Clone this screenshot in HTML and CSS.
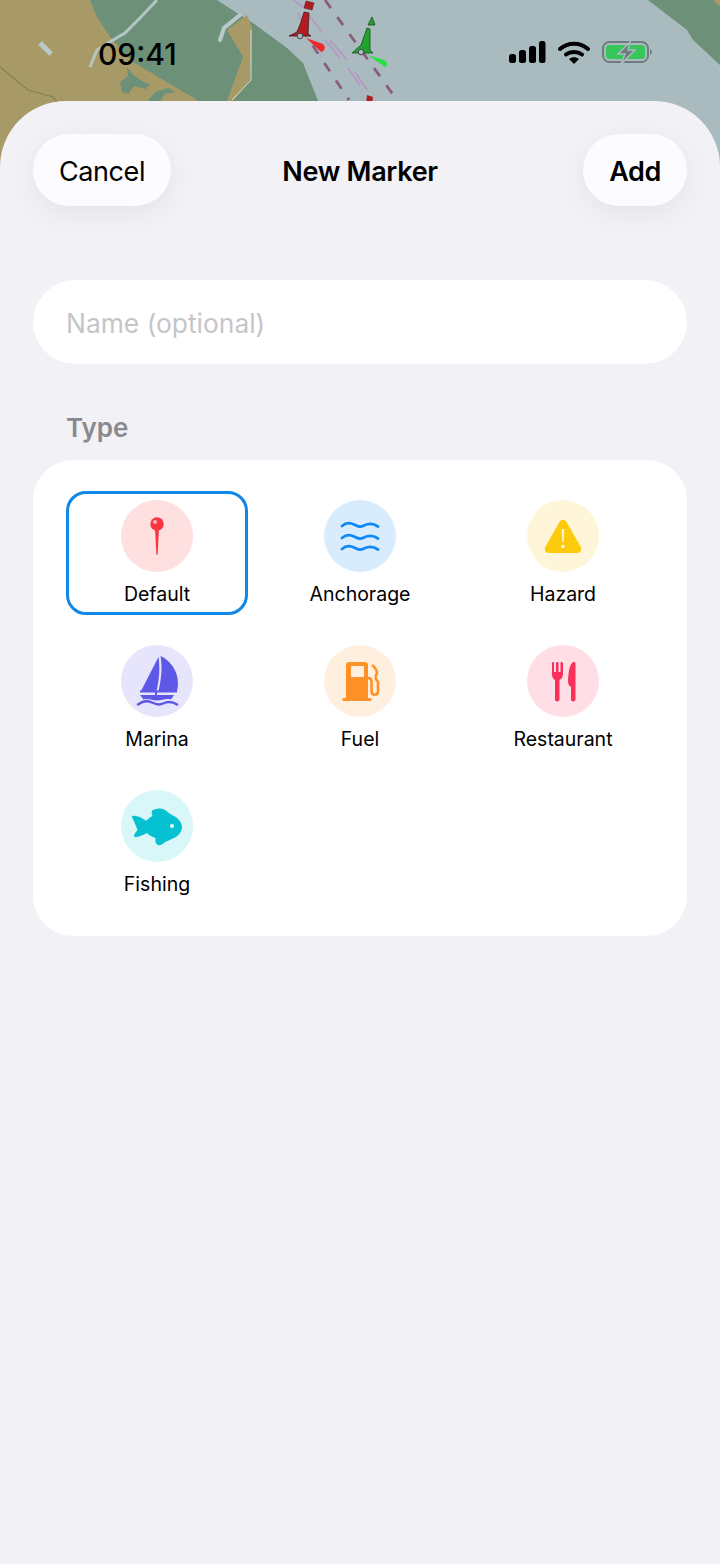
FILE: index.html
```html
<!DOCTYPE html>
<html lang="en">
<head>
  <meta charset="UTF-8">
  <meta name="viewport" content="width=device-width, initial-scale=1.0">
  <title>New Marker</title>
  <link rel="stylesheet" href="styles.css">
</head>
<body>
  <div class="screen">
    <svg class="map" viewBox="0 0 720 240" width="720" height="240">
      <rect width="720" height="240" fill="#a9bbbf"/>
      <path d="M0 0H217L237 13 253 23 287 48 303 63 318 101 330 240H0Z" fill="#6d9079"/>
      <path d="M0 0H90L97 17 110 37 133 62 197 100 260 240H0Z" fill="#a89a66"/>
      <path d="M0 67 28 90 53 97 58 103" fill="none" stroke="#857f58" stroke-width="1.200"/>
      <path d="M247 15 227 30 243 57 227 101H233L250 80 252 27Z" fill="#a89a66"/>
      <path d="M240 15 224 28 220 40" fill="none" stroke="#b9c9ca" stroke-width="4" stroke-linecap="round"/>
      <path d="M251 30 251 80 232 100" fill="none" stroke="#d5dfd8" stroke-width="1"/>
      <path d="M157 0 140 18 125 33 113 40 97 50 90 67" fill="none" stroke="#b4c5c5" stroke-width="3"/>
      <path d="M40 43 51 54" stroke="#b9c9ca" stroke-width="5" fill="none"/>
      <path d="M127 67 133 75 144 82 150 84 146 89 134 86 128 94 122 92 120 82 128 76ZM148 101 155 92 168 88 176 92 165 94 160 101Z" fill="#6d9079"/>
      <path d="M648 0 687 30 693 40 720 65V0Z" fill="#6d9079"/>
      <path d="M713 0 720 7V0Z" fill="#a89a66"/>
      <path d="M325 0 397 100M301 28 349 100" fill="none" stroke="#8c5c7c" stroke-width="2.800" stroke-dasharray="10 11"/>
      <path d="M293 0 303 7M310 17 323 33M298 13 302 23M325 40 340 58M330 40 347 60M348 68 360 85M355 72 367 90" fill="none" stroke="#b795c4" stroke-width="1.600"/>
      <path d="M306 1 314 3 312 10 304 8Z" fill="#b01c22" stroke="#5a1c20" stroke-width=".6"/>
      <path d="M304 12 309 13 308 34 311 36H289L297 32 301 22Z" fill="#b01c22" stroke="#451a1a" stroke-width=".8"/>
      <circle cx="300" cy="36" r="2.800" fill="#a9bbbf" stroke="#444" stroke-width="1"/>
      <path d="M306 38 323 44C326 47 325 51 321 52Z" fill="#f02a2a"/>
      <path d="M372 17 375 25 368 25ZM367 28 370 29 370 50 373 53H352L361 45Z" fill="#1fa32c" stroke="#1c4a22" stroke-width=".8"/>
      <circle cx="361" cy="52" r="2.800" fill="#a9bbbf" stroke="#444" stroke-width="1"/>
      <path d="M368 55 384 60C388 62 388 66 385 67Z" fill="#2edc4a"/>
      <path d="M367 95 373 97 372 104H366Z" fill="#b01c22"/>
    </svg>

    <div class="status-bar">
      <span class="time">09:41</span>
      <div class="status-icons">
        <svg width="37" height="22" viewBox="0 0 37 22">
          <rect x="0" y="13" width="7" height="9" rx="2.500"/>
          <rect x="10" y="9" width="7" height="13" rx="2.500"/>
          <rect x="20" y="5" width="7" height="17" rx="2.500"/>
          <rect x="30" y="0" width="6.500" height="22" rx="2.500"/>
        </svg>
        <svg width="32" height="23" viewBox="0 0 32 23">
          <path d="M2 8C10 1 22 1 30 8" fill="none" stroke="#000" stroke-width="4" stroke-linecap="round"/>
          <path d="M8 13.500C12.500 10 19.500 10 24 13.500" fill="none" stroke="#000" stroke-width="4" stroke-linecap="round"/>
          <path d="M11 18C14 15.500 18 15.500 21 18L16 23Z"/>
        </svg>
        <svg width="51" height="24" viewBox="0 0 51 24">
          <rect x="1" y="2" width="45" height="20" rx="6.500" fill="none" stroke="#6f7c7f" stroke-width="2"/>
          <rect x="4" y="5" width="39" height="14" rx="3.500" fill="#35c759"/>
          <path d="M48 9C50.500 10 50.500 14 48 15Z" fill="#6f7c7f"/>
          <path d="M28 2 16 14H23L19 24 33 10H26Z" fill="#6f7c7f" stroke="#a9bbbf" stroke-width="1.500"/>
        </svg>
      </div>
    </div>

    <div class="sheet">
      <div class="nav">
        <button class="pill">Cancel</button>
        <h1>New Marker</h1>
        <button class="pill add">Add</button>
      </div>

      <div class="name-field">Name (optional)</div>

      <div class="section-label">Type</div>
      <div class="type-card">
        <div class="type selected">
          <div class="circle c-red">
            <svg width="72" height="72" viewBox="0 0 72 72">
              <path d="M34 28H38L36.700 53.500C36.400 55.500 35.600 55.500 35.300 53.500Z" fill="#f9343f"/>
              <circle cx="36" cy="24" r="6.700" fill="#f9343f"/>
              <circle cx="34" cy="22" r="2" fill="#ffb4b8"/>
            </svg>
          </div>
          <span>Default</span>
        </div>
        <div class="type">
          <div class="circle c-blue">
            <svg width="72" height="72" viewBox="0 0 72 72">
              <g fill="none" stroke="#1088f5" stroke-width="2.800" stroke-linecap="round">
                <path d="M18 26C22 22.500 26 22.500 30 24.500S36 27.500 40 25.500 48 22.500 54 26.500"/>
                <path d="M18 38C22 34.500 26 34.500 30 36.500S36 39.500 40 37.500 48 34.500 54 38.500"/>
                <path d="M18 49C22 45.500 26 45.500 30 47.500S36 50.500 40 48.500 48 45.500 54 49.500"/>
              </g>
            </svg>
          </div>
          <span>Anchorage</span>
        </div>
        <div class="type">
          <div class="circle c-yellow">
            <svg width="72" height="72" viewBox="0 0 72 72">
              <path d="M32.500 22C34.500 19 37.500 19 39.500 22L53.500 46.500C55.300 50 53.500 53 50 53H22C18.500 53 16.700 50 18.500 46.500Z" fill="#fecb0c"/>
              <path d="M34.800 29H37.200L36.700 42H35.300Z" fill="#fff8df"/>
              <circle cx="36" cy="46.500" r="1.800" fill="#fff8df"/>
            </svg>
          </div>
          <span>Hazard</span>
        </div>
        <div class="type">
          <div class="circle c-purple">
            <svg width="72" height="72" viewBox="0 0 72 72">
              <path d="M37.500 12 20 46H35.500C38.500 33 39 22 37.500 12Z" fill="#5d58e6"/>
              <path d="M39.500 11C49 15 57 26 57 38 57 41 56.500 44 56 46H37.500C40.500 33 41.500 22 39.500 11Z" fill="#5d58e6"/>
              <path d="M19 45.500H56V47.500H36V50H53L50 54.500C45 53 41 55.500 36 55.500S27 53 22.500 54.500L19 50H34V47.500H19Z" fill="#5d58e6"/>
              <path d="M17 59.500C22 55.500 27 55.500 31 57.500S38 60.500 42 58.500 50 55.500 56 59.500" fill="none" stroke="#5d58e6" stroke-width="2.500" stroke-linecap="round"/>
            </svg>
          </div>
          <span>Marina</span>
        </div>
        <div class="type">
          <div class="circle c-orange">
            <svg width="72" height="72" viewBox="0 0 72 72">
              <path d="M22 20C22 18 23.500 17 25 17H41C42.500 17 44 18 44 20V53H46.500C48 53 48 56 46.500 56H19.500C18 56 18 53 19.500 53H22ZM28 21C27.500 21 27 21.500 27 22V31C27 31.500 27.500 32 28 32H39C39.500 32 40 31.500 40 31V22C40 21.500 39.500 21 39 21Z" fill="#fe9228" fill-rule="evenodd"/>
              <path d="M48 20Q53 24 53 28 50 33 54 37V46C54 51 47.500 51 47.500 46V36C47.500 34 46 33 44 33" fill="none" stroke="#fe9228" stroke-width="2.600"/>
            </svg>
          </div>
          <span>Fuel</span>
        </div>
        <div class="type">
          <div class="circle c-pink">
            <svg width="72" height="72" viewBox="0 0 72 72">
              <path d="M25 18C25 16.500 27 16.500 27 18V27H29V18C29 16.500 31.500 16.500 31.500 18V27H33.500V18C33.500 16.500 36 16.500 36 18V29C36 32.500 34 34 32.500 35V54.500C32.500 57 28 57 28 54.500V35C26.500 34 25 32.500 25 29Z" fill="#f9305a"/>
              <path d="M45.500 17.500C47 16.500 48.500 17 48.500 19V54.500C48.500 57 44 57 44 54.500V42C42 41 41 39 41 36 41.500 28 42 21 45.500 17.500Z" fill="#f9305a"/>
            </svg>
          </div>
          <span>Restaurant</span>
        </div>
        <div class="type">
          <div class="circle c-teal">
            <svg width="72" height="72" viewBox="0 0 72 72">
              <path d="M11 27C10.500 25 14 25.500 17 26.500 20 27.500 23 29 25 31 27 29 29 27 31.500 26 30 23 30.500 19.500 33.500 19.500 37 18 41 18 44 20 47 22 49 24 51 25 56 27 61 32 61 37 61 42 57 46 53 48 49 50 46 51 44 52 42 54 39 56 37 55 34.500 54 34 51 34.500 48 31 47 28 45 26 43 22 45 18 47 14 47 11.500 47 14 43 16.500 40 15 36 13 31 11 27Z" fill="#05c1d1"/>
              <circle cx="51" cy="36" r="2" fill="#e8fbfc"/>
            </svg>
          </div>
          <span>Fishing</span>
        </div>
      </div>
    </div>
  </div>
</body>
</html>
```

FILE: styles.css
```css
* { box-sizing: border-box; }
html, body { margin: 0; padding: 0; }
body {
  width: 720px;
  height: 1564px;
  overflow: hidden;
  font-family: Inter, "Noto Sans", sans-serif;
  background: #f1f1f6;
  color: #000;
}
.screen {
  position: relative;
  height: 1564px;
  overflow: hidden;
}
.map {
  position: absolute;
  top: 0;
  left: 0;
  display: block;
}
.status-bar {
  position: relative;
  height: 101px;
  display: flex;
  justify-content: space-between;
  align-items: flex-start;
  padding: 36px 67px 0 98px;
}
.time {
  font-size: 30px;
  font-weight: 500;
  line-height: 36px;
}
.status-icons {
  display: flex;
  align-items: center;
  gap: 12px;
  height: 32px;
}
.sheet {
  position: relative;
  height: 1463px;
  background: #f1f1f6;
  border-radius: 66px 66px 0 0;
  padding: 33px 33px 0;
}
.nav {
  display: grid;
  grid-template-columns: 1fr auto 1fr;
  align-items: center;
  height: 72px;
}
.nav h1 {
  margin: 0;
  padding-top: 2px;
  font-size: 27px;
  font-weight: 600;
  letter-spacing: -0.3px;
}
.pill {
  height: 72px;
  width: 138px;
  padding: 2px 0 0;
  border: none;
  border-radius: 36px;
  background: #fcfcfe;
  font-family: inherit;
  font-size: 27px;
  color: #000;
  letter-spacing: -0.4px;
  box-shadow: 0 8px 28px rgba(0, 0, 0, 0.06);
}
.add {
  width: 104px;
  justify-self: end;
  font-weight: 600;
}
.name-field {
  margin-top: 74px;
  height: 84px;
  border-radius: 42px;
  background: #fff;
  padding: 2px 0 0 33px;
  display: flex;
  align-items: center;
  font-size: 26.4px;
  color: #c5c5c9;
}
.section-label {
  margin: 47px 0 0 33px;
  padding-top: 1px;
  height: 32px;
  line-height: 32px;
  font-size: 26px;
  font-weight: 600;
  color: #8a8a8e;
}
.type-card {
  margin-top: 17px;
  height: 476px;
  background: #fff;
  border-radius: 40px;
  padding: 31px 33px;
  display: grid;
  grid-template-columns: repeat(3, 182px);
  grid-auto-rows: 124px;
  column-gap: 21px;
  row-gap: 21px;
}
.type {
  display: flex;
  flex-direction: column;
  align-items: center;
  padding-top: 9px;
  border: 3px solid transparent;
  border-radius: 20px;
}
.type span {
  margin-top: 10px;
  font-size: 19.5px;
  line-height: 24px;
}
.type.selected {
  border-color: #0f88ea;
}
.circle {
  flex: none;
  width: 72px;
  height: 72px;
  margin-top: -3px;
  border-radius: 50%;
}
.circle svg {
  display: block;
}
.c-red { background: #fee0e1; }
.c-blue { background: #d9ecfe; }
.c-yellow { background: #fff6d9; }
.c-purple { background: #e6e5fb; }
.c-orange { background: #ffefdf; }
.c-pink { background: #ffdfe5; }
.c-teal { background: #d9f6f8; }
```
